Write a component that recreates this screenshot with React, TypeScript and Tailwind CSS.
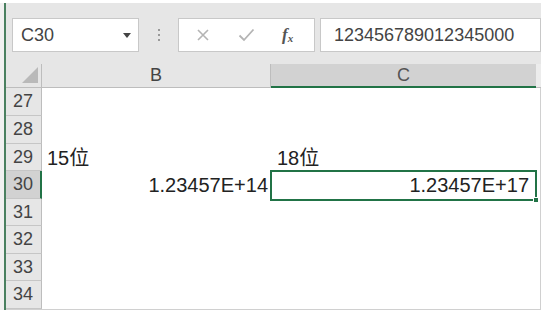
const ROWS: [number, number][] = [
  [27, 28],
  [28, 28],
  [29, 27],
  [30, 28],
  [31, 27],
  [32, 28],
  [33, 27],
  [34, 28],
];

function FxIcon() {
  return (
    <span className="font-['Liberation_Serif',serif] italic font-bold text-[17px] text-[#555] leading-none">
      f<span className="text-[11px] relative top-[2px]">x</span>
    </span>
  );
}

export default function App() {
  return (
    <div className="w-[545px] h-[314px] bg-white overflow-hidden font-['Liberation_Sans','Noto_Sans_CJK_SC',sans-serif]">
      <div className="mt-[3px] flex w-[541px] h-[307px]">
        <div className="w-[4px] bg-[#f1f1f1]" />
        <div className="w-[2px] bg-[#4a8060]" />
        <div className="flex-1 flex flex-col bg-[#e6e6e6] border-b border-[#d0d0d0]">
          {/* formula bar */}
          <div className="h-[61px] flex items-start pt-[15px]">
            <div className="ml-[6px] w-[127px] h-[34px] bg-white border border-[#c8c8c8] flex items-center justify-between pl-[8px] pr-[7px]">
              <span className="text-[18px] text-[#444]">C30</span>
              <span className="w-0 h-0 border-l-[4px] border-r-[4px] border-t-[5px] border-l-transparent border-r-transparent border-t-[#444]" />
            </div>
            <div className="w-[39px] h-[34px] flex flex-col items-center justify-center gap-[3px]">
              <span className="w-[2px] h-[2px] bg-[#999]" />
              <span className="w-[2px] h-[2px] bg-[#999]" />
              <span className="w-[2px] h-[2px] bg-[#999]" />
            </div>
            <div className="w-[137px] h-[34px] bg-white border border-[#c8c8c8] flex items-center">
              <svg className="ml-[17px]" width="14" height="14" viewBox="0 0 14 14">
                <path d="M2 2 L12 12 M12 2 L2 12" stroke="#b4b4b4" strokeWidth="1.6" fill="none" />
              </svg>
              <svg className="ml-[28px]" width="17" height="14" viewBox="0 0 17 14">
                <path d="M1.5 7.5 L6 12 L15.5 1.5" stroke="#b4b4b4" strokeWidth="1.8" fill="none" />
              </svg>
              <span className="ml-[27px]"><FxIcon /></span>
            </div>
            <div className="ml-[5px] flex-1 h-[34px] bg-white border border-[#c8c8c8] flex items-center pl-[13px]">
              <span className="text-[18px] text-[#444]">123456789012345000</span>
            </div>
          </div>

          {/* column headers */}
          <div className="h-[24px] flex">
            <div className="w-[36px] border-r border-b border-[#bdbdbd] flex items-end justify-end pr-[3px] pb-[4px]">
              <svg width="16" height="16" viewBox="0 0 16 16">
                <path d="M16 0 L16 16 L0 16 Z" fill="#b9b9b9" />
              </svg>
            </div>
            <div className="w-[229px] border-r border-b border-[#bdbdbd] flex items-center justify-center text-[18px] text-[#444]">
              B
            </div>
            <div className="w-[265px] bg-[#d2d2d2] border-b-2 border-[#217346] flex items-center justify-center text-[18px] text-[#555]">
              C
            </div>
            <div className="flex-1 bg-[#ececec] border-b border-[#bdbdbd]" />
          </div>

          {/* rows */}
          {ROWS.map(([n, h]) => {
            const sel = n === 30;
            return (
              <div key={n} className="flex" style={{ height: h }}>
                <div
                  className={`w-[36px] border-b border-[#c6c6c6] flex items-center pl-[7px] text-[18px] text-[#444] ${
                    sel ? "bg-[#d2d2d2] border-r-2 border-r-[#217346]" : "border-r border-r-[#bdbdbd]"
                  }`}
                >
                  {n}
                </div>
                <div className="flex-1 flex bg-white border-r border-[#d0d0d0] text-[20px] text-[#222]">
                  <div className="w-[229px] flex items-center pl-[5px] pr-[3px]">
                    {n === 29 && <span>15位</span>}
                    {n === 30 && <span className="ml-auto">1.23457E+14</span>}
                  </div>
                  <div className="w-[265px] relative flex items-center pl-[6px] pr-[7px]">
                    {n === 29 && <span>18位</span>}
                    {n === 30 && <span className="ml-auto">1.23457E+17</span>}
                    {sel && (
                      <>
                        <div className="absolute -left-[1px] -top-[1px] -right-[1px] -bottom-[2px] border-2 border-[#217346]" />
                        <div className="absolute -right-[3px] -bottom-[4px] w-[6px] h-[6px] bg-[#217346] border border-white" />
                      </>
                    )}
                  </div>
                </div>
              </div>
            );
          })}
        </div>
      </div>
    </div>
  );
}
